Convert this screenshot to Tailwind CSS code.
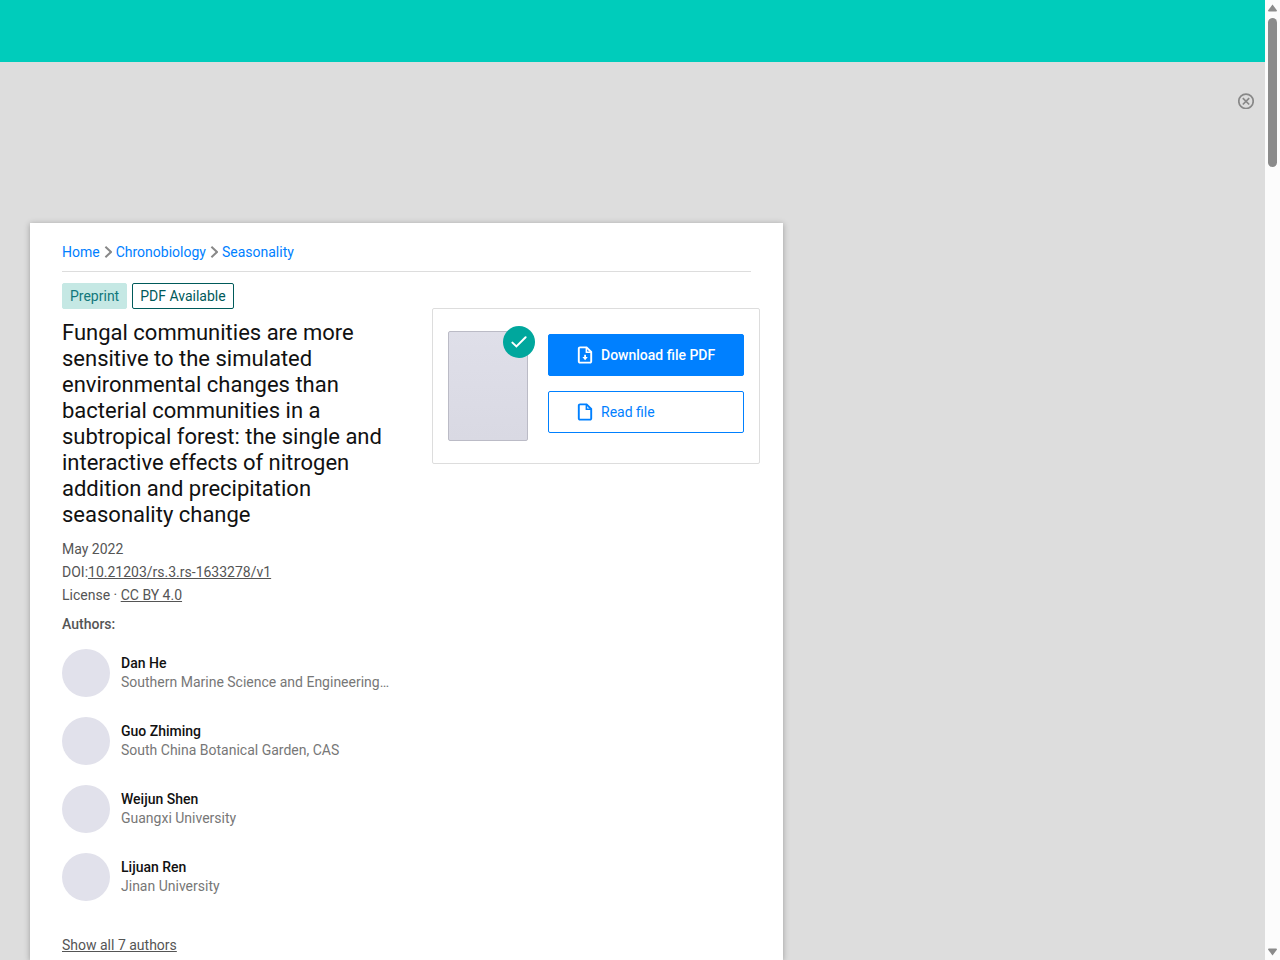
<!DOCTYPE html>
<html lang="en">
<head>
  <meta charset="UTF-8">
  <meta name="viewport" content="width=device-width, initial-scale=1.0">
  <title>Fungal communities are more sensitive to the simulated environmental changes</title>
  <script src="https://cdn.jsdelivr.net/npm/@tailwindcss/browser@4"></script>
</head>
<body class="flex h-screen overflow-hidden bg-[#ddd] font-[Roboto,sans-serif] text-sm text-[#555]">
  <div class="flex min-w-0 flex-1 flex-col">
    <!-- Top bar -->
    <header class="h-[62px] shrink-0 bg-[#00ccbb]"></header>

    <!-- Banner -->
    <div class="flex h-[161px] shrink-0 items-start justify-end pt-[31px] pr-[11px]">
      <button type="button" aria-label="Close" class="text-[#888]">
        <svg class="block size-4" viewBox="0 0 16 16" fill="none" stroke="currentColor" stroke-width="1.7">
          <circle cx="8" cy="8.3" r="7.2"/>
          <path d="M4.8 5.1l6.4 6.4M11.2 5.1l-6.4 6.4"/>
        </svg>
      </button>
    </div>

    <main class="ml-[30px] w-full max-w-[753px] flex-1 bg-white pt-[19px] shadow-[0_1px_6px_rgba(0,0,0,0.3)]">
      <!-- Breadcrumb -->
      <nav class="mx-8 flex items-center border-b border-[#ddd] pb-[9px] leading-5 text-[#0080ff]">
        <a href="#">Home</a>
        <svg class="mx-1 h-3 w-2 text-[#888]" viewBox="0 0 8 12" fill="none" stroke="currentColor" stroke-width="2"><path d="M1.4 0.8L7 6L1.4 11.2"/></svg>
        <a href="#">Chronobiology</a>
        <svg class="mx-1 h-3 w-2 text-[#888]" viewBox="0 0 8 12" fill="none" stroke="currentColor" stroke-width="2"><path d="M1.4 0.8L7 6L1.4 11.2"/></svg>
        <a href="#">Seasonality</a>
      </nav>

      <div class="flex items-start gap-10 pt-[11px] pr-[23px] pl-8">
        <!-- Publication details -->
        <section class="min-w-0 flex-1">
          <div class="flex gap-[5px] leading-6">
            <span class="rounded-xs border border-[#c5e8e4] bg-[#c5e8e4] px-[7px] text-[#11777b]">Preprint</span>
            <span class="rounded-xs border border-[#005a5a] px-[7px] text-[#005a5a]">PDF Available</span>
          </div>
          <h1 class="mt-[11px] text-[22px] leading-[26px] text-[#111]">Fungal communities are more sensitive to the simulated environmental changes than bacterial communities in a subtropical forest: the single and interactive effects of nitrogen addition and precipitation seasonality change</h1>
          <div class="mt-[10px] leading-[23px]">
            <p>May 2022</p>
            <p>DOI:<a href="#" class="underline">10.21203/rs.3.rs-1633278/v1</a></p>
            <p>License · <a href="#" class="underline">CC BY 4.0</a></p>
          </div>

          <h2 class="mt-[7px] font-medium leading-5">Authors:</h2>
          <ul class="mt-[15px] flex flex-col gap-5 leading-[19px] text-[#777]">
            <li class="flex items-center gap-[11px]">
              <div class="size-12 shrink-0 rounded-full bg-[#e1e1eb]"></div>
              <div>
                <a href="#" class="block font-medium text-[#111]">Dan He</a>
                <p>Southern Marine Science and Engineering…</p>
              </div>
            </li>
            <li class="flex items-center gap-[11px]">
              <div class="size-12 shrink-0 rounded-full bg-[#e1e1eb]"></div>
              <div>
                <a href="#" class="block font-medium text-[#111]">Guo Zhiming</a>
                <p>South China Botanical Garden, CAS</p>
              </div>
            </li>
            <li class="flex items-center gap-[11px]">
              <div class="size-12 shrink-0 rounded-full bg-[#e1e1eb]"></div>
              <div>
                <a href="#" class="block font-medium text-[#111]">Weijun Shen</a>
                <p>Guangxi University</p>
              </div>
            </li>
            <li class="flex items-center gap-[11px]">
              <div class="size-12 shrink-0 rounded-full bg-[#e1e1eb]"></div>
              <div>
                <a href="#" class="block font-medium text-[#111]">Lijuan Ren</a>
                <p>Jinan University</p>
              </div>
            </li>
          </ul>
          <a href="#" class="mt-[34px] inline-block leading-5 underline">Show all 7 authors</a>
        </section>

        <!-- Download box -->
        <aside class="mt-[25px] flex w-[328px] shrink-0 gap-5 rounded-xs border border-[#ddd] px-[15px] py-[22px]">
          <div class="relative h-[110px] w-20 shrink-0 rounded-xs border border-[#bbbbc6] bg-linear-to-b from-[#dfdfe9] to-[#d9d9e3]">
            <span class="absolute -top-[6px] -right-[8px] flex size-8 items-center justify-center rounded-full bg-[#00a79d] text-white">
              <svg class="h-3 w-4" viewBox="0 0 16 12" fill="none" stroke="currentColor" stroke-width="2" stroke-linecap="round"><path d="M1.4 6.6L5.4 10.4L14.6 1.2"/></svg>
            </span>
          </div>
          <div class="flex flex-1 flex-col gap-[15px] pt-[3px]">
            <button type="button" class="flex h-[42px] items-center gap-2 rounded-xs border border-[#0080ff] bg-[#0080ff] pl-7 font-medium text-white">
              <svg class="h-[18px] w-4" viewBox="0 0 16 18" fill="none" stroke="currentColor" stroke-width="1.9">
                <path d="M3 1.4h6.6l4.6 4.6v9.4a1.2 1.2 0 0 1-1.2 1.2H3a1.2 1.2 0 0 1-1.2-1.2V2.6A1.2 1.2 0 0 1 3 1.4z"/>
                <path d="M9.4 1.6v4.6h4.6" stroke-width="1.6"/>
                <path d="M7.2 8.8h1.8v2.2h1.8L8.1 14.2L5.4 11h1.8z" fill="currentColor" stroke="none"/>
              </svg>
              Download file PDF
            </button>
            <button type="button" class="flex h-[42px] items-center gap-2 rounded-xs border border-[#0080ff] pl-7 text-[#0080ff]">
              <svg class="h-[18px] w-4" viewBox="0 0 16 18" fill="none" stroke="currentColor" stroke-width="1.9">
                <path d="M3 1.4h6.6l4.6 4.6v9.4a1.2 1.2 0 0 1-1.2 1.2H3a1.2 1.2 0 0 1-1.2-1.2V2.6A1.2 1.2 0 0 1 3 1.4z"/>
                <path d="M9.4 1.6v4.6h4.6" stroke-width="1.6"/>
              </svg>
              Read file
            </button>
          </div>
        </aside>
      </div>
    </main>
  </div>

  <!-- Scrollbar -->
  <div class="flex w-[15px] shrink-0 flex-col items-center bg-[#fcfcfc] pt-1 pb-1 text-[#8b8b8b]" aria-hidden="true">
    <svg class="h-2 w-[9px] shrink-0" viewBox="0 0 9 8" fill="currentColor"><path d="M4.5 0.5L9 6.5Q9 7.5 8 7.5H1Q0 7.5 0 6.5z"/></svg>
    <div class="mt-[6px] h-[149px] w-[9px] rounded-full bg-[#8b8b8b]"></div>
    <svg class="mt-auto h-2 w-[9px] shrink-0" viewBox="0 0 9 8" fill="currentColor"><path d="M4.5 7.5L0 1.5Q0 0.5 1 0.5H8Q9 0.5 9 1.5z"/></svg>
  </div>
</body>
</html>
